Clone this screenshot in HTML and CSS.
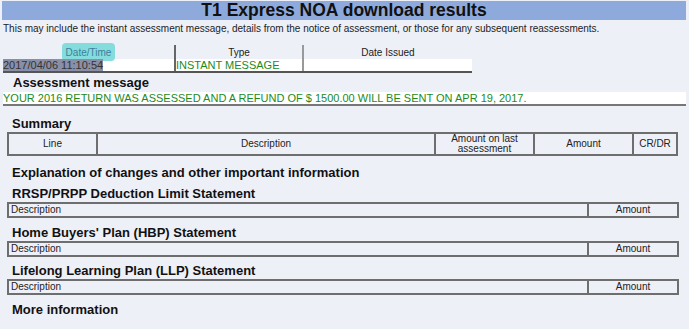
FILE: index.html
```html
<!DOCTYPE html>
<html lang="en">
<head>
    <meta charset="UTF-8">
    <meta name="viewport" content="width=device-width, initial-scale=1.0">
    <title>T1 Express NOA download results</title>
    <link rel="stylesheet" href="styles.css">
</head>
<body>

    <h1 class="title">T1 Express NOA download results</h1>
    <p class="intro">This may include the instant assessment message, details from the notice of assessment, or those for any subsequent reassessments.</p>

    <table class="noa-list">
        <tr>
            <th class="col-date"><span class="hover-tag">Date/Time</span></th>
            <th class="col-type">Type</th>
            <th class="col-issued">Date Issued</th>
        </tr>
        <tr class="row">
            <td><span class="selected">2017/04/06 11:10:54</span></td>
            <td class="green">INSTANT MESSAGE</td>
            <td></td>
        </tr>
    </table>

    <h2 class="section first">Assessment message</h2>
    <div class="message">YOUR 2016 RETURN WAS ASSESSED AND A REFUND OF $ 1500.00 WILL BE SENT ON APR 19, 2017.</div>

    <h2 class="section">Summary</h2>
    <table class="grid summary">
        <tr>
            <th class="c-line">Line</th>
            <th>Description</th>
            <th class="c-last">Amount on last assessment</th>
            <th class="c-amount">Amount</th>
            <th class="c-crdr">CR/DR</th>
        </tr>
    </table>

    <h2 class="section explain">Explanation of changes and other important information</h2>

    <h2 class="section">RRSP/PRPP Deduction Limit Statement</h2>
    <table class="grid small">
        <tr>
            <th class="c-desc">Description</th>
            <th class="c-amt">Amount</th>
        </tr>
    </table>

    <h2 class="section">Home Buyers' Plan (HBP) Statement</h2>
    <table class="grid small">
        <tr>
            <th class="c-desc">Description</th>
            <th class="c-amt">Amount</th>
        </tr>
    </table>

    <h2 class="section">Lifelong Learning Plan (LLP) Statement</h2>
    <table class="grid small">
        <tr>
            <th class="c-desc">Description</th>
            <th class="c-amt">Amount</th>
        </tr>
    </table>

    <h2 class="section">More information</h2>

</body>
</html>
```

FILE: styles.css
```css
body {
    font-family: "Liberation Sans", Arial, sans-serif;
    background-color: #eef0f8;
    color: #111;
    margin: 0;
    padding: 1px 3px 0 2px;
}
.title {
    background-color: #8eaadc;
    font-size: 17.5px;
    text-align: center;
    margin: 0;
    height: 19px;
    line-height: 19px;
    color: #111;
}
.intro {
    font-size: 10px;
    margin: 3px 0 0 1px;
    color: #222;
}
.noa-list {
    border-collapse: collapse;
    width: 469px;
    margin: 11px 0 0 1px;
    font-size: 10px;
}
.noa-list th {
    font-weight: normal;
    height: 14px;
    padding: 0;
    vertical-align: middle;
    color: #222;
}
.noa-list .col-date { width: 171px; }
.noa-list .col-type { width: 126px; }
.col-type, .col-issued, .row td + td {
    border-left: 2px solid #666;
}
.col-issued { border-left-color: #999; }
.row td {
    background-color: #fff;
    padding: 0;
    height: 12px;
    line-height: 12px;
    font-size: 11px;
    border-bottom: 2px solid #555;
}
.row td:last-child { border-left-color: #999; }
.hover-tag {
    display: inline-block;
    background-color: #84dcdc;
    border-radius: 4px;
    padding: 4px 4px 3px;
    margin: -4px 0 -3px;
    color: #3b7f9b;
}
.selected {
    background-color: #8a8fa8;
    color: #333;
}
.green {
    color: #1d8a1d;
}
.section {
    font-size: 13px;
    margin: 0;
    padding-left: 10px;
    line-height: 16px;
}
.section.first {
    margin-top: 2px;
    padding-left: 11px;
}
.section.explain {
    margin-bottom: 5px;
}
.message {
    background-color: #fff;
    color: #1d8a1d;
    font-size: 11px;
    line-height: 12px;
    margin: 1px 0 10px 1px;
    border-bottom: 2px solid #777;
}
.grid {
    border-collapse: collapse;
    margin-left: 5px;
    font-size: 10px;
    color: #222;
}
.grid th {
    font-weight: normal;
    border: 2px solid #6e6e6e;
    padding: 0 2px;
    line-height: 10px;
}
.summary {
    width: 671px;
    margin-bottom: 9px;
}
.summary th { height: 18px; }
.c-line { width: 83px; }
.c-last { width: 93px; }
.c-amount { width: 93px; }
.c-crdr { width: 38px; }
.small {
    width: 672px;
    margin-bottom: 6.5px;
}
.small th { height: 12px; }
.c-desc { text-align: left; }
.c-amt { width: 84px; }
```
